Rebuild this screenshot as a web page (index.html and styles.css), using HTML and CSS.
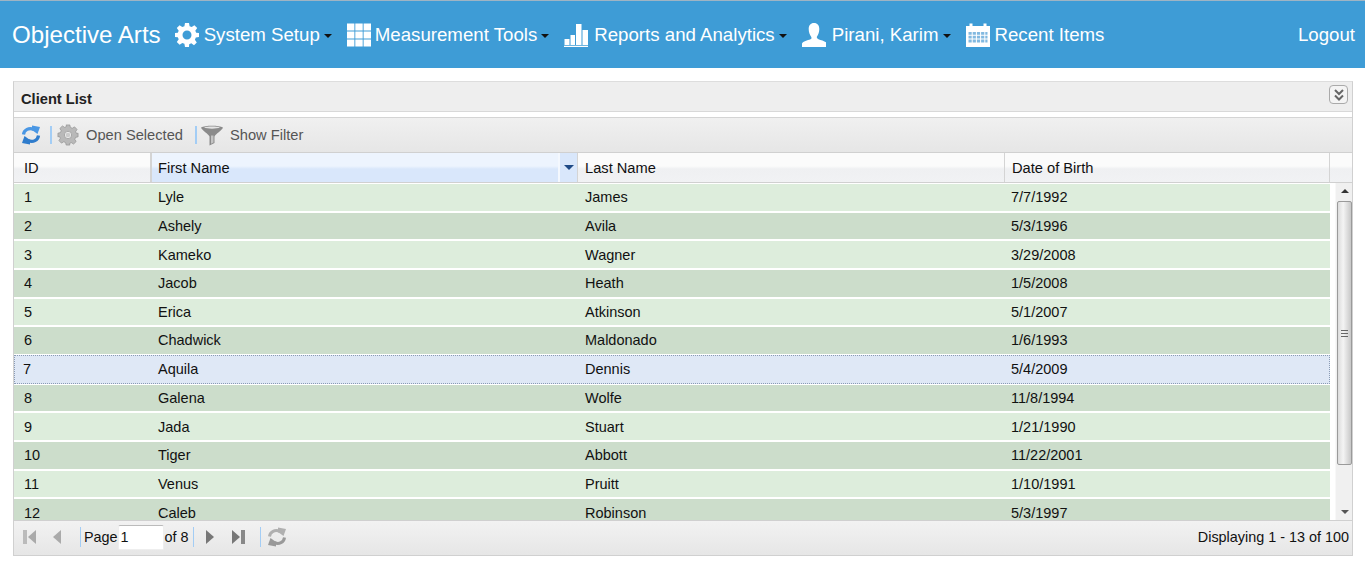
FILE: index.html
```html
<!DOCTYPE html>
<html lang="en">
<head>
    <meta charset="UTF-8">
    <title>Client List</title>
    <link rel="stylesheet" href="styles.css">
</head>
<body>
    <nav class="navbar">
        <a class="brand">Objective Arts</a>
        <a class="nav-item">
            <svg class="nav-icon" viewBox="0 0 24 24"><path fill="#fff" fill-rule="evenodd" d="M10 0h4l.6 3.2 2.100.9L19.400 2.200l2.800 2.800-1.900 2.700.9 2.100 2.800.2v4l-3.200.6-.9 2.100 1.900 2.700-2.800 2.800-2.700-1.900-2.100.9L14 24h-4l-.6-3.200-2.100-.9-2.700 1.900-2.800-2.800 1.900-2.700-.9-2.100L0 14v-4l2.800-.2.9-2.100L1.800 5l2.800-2.800 2.700 1.900 2.100-.9zM12 7.500a4.500 4.500 0 1 0 0 9 4.500 4.500 0 0 0 0-9z"/></svg>
            System Setup<span class="caret"></span>
        </a>
        <a class="nav-item tight">
            <svg class="nav-icon" viewBox="0 0 24 24"><path fill="#fff" d="M0 .5h7.400v7H0zM8.300.5h7.400v7H8.300zM16.600.5H24v7h-7.400zM0 8.500h7.400v7H0zM8.300 8.500h7.400v7H8.300zM16.600 8.500H24v7h-7.400zM0 16.500h7.400v7H0zM8.300 16.500h7.400v7H8.300zM16.600 16.500H24v7h-7.400z"/></svg>
            Measurement Tools<span class="caret"></span>
        </a>
        <a class="nav-item reports">
            <svg class="nav-icon" viewBox="0 0 24 24"><path fill="#fff" d="M0 24v-1.200h24V24zM.5 22v-6h5v6zM6.500 22V12H11v10zM12 22V1h5.500v21zM18.500 22V7H24v15z"/></svg>
            Reports and Analytics<span class="caret"></span>
        </a>
        <a class="nav-item person">
            <svg class="nav-icon" viewBox="0 0 24 24"><path fill="#fff" d="M12 0c3.500 0 5.300 2.500 5.300 6 0 3-1 5.500-2.300 7.500-.5 1 0 2 1.500 2.700 3 1.200 7.500 2 8.500 4.300V24H0v-3.500c1-2.300 5.500-3.100 8.500-4.300C10 15.500 9.500 14.500 9 13.500 7.700 11.500 6.700 9 6.700 6c0-3.500 1.800-6 5.300-6z"/></svg>
            Pirani, Karim<span class="caret"></span>
        </a>
        <a class="nav-item">
            <svg class="nav-icon" viewBox="0 0 24 24"><path fill="#fff" d="M0 3h3.500V.5h3V3h11V.5h3V3H24v21H0z"/><path fill="#82b9e0" d="M2.500 9h3.200v2.800H2.500zM6.700 9h3.200v2.800H6.700zM10.900 9h3.200v2.800h-3.200zM15.100 9h3.200v2.800h-3.200zM19.300 9h2.200v2.800h-2.200zM2.500 12.800h3.200v2.800H2.500zM6.700 12.800h3.200v2.800H6.700zM10.900 12.800h3.200v2.800h-3.200zM15.100 12.800h3.200v2.800h-3.200zM19.300 12.800h2.200v2.800h-2.200zM2.500 16.600h3.200v2.800H2.500zM6.700 16.600h3.200v2.800H6.700zM10.900 16.600h3.200v2.800h-3.200zM15.100 16.600h3.200v2.800h-3.200zM19.300 16.600h2.200v2.800h-2.200z"/></svg>
            Recent Items
        </a>
        <a class="logout">Logout</a>
    </nav>

    <section class="panel">
        <header class="panel-title">
            <span>Client List</span>
            <span class="collapse-btn">
                <svg viewBox="0 0 12 12" width="12" height="12"><path fill="none" stroke="#666" stroke-width="2" d="M2 1l4 4 4-4M2 6.500l4 4 4-4"/></svg>
            </span>
        </header>

        <div class="toolbar">
            <svg class="tool-icon" viewBox="0 0 20 20"><path fill="none" stroke="#4a97e4" stroke-width="3.200" d="M2.500 9.500C3 5 8 2 13 4.600"/><path fill="#4a97e4" d="M11 .5l8 1.500-2.500 7-5.500-4z"/><path fill="none" stroke="#2f7ccc" stroke-width="3.200" d="M17.500 10.500C17 15 12 18 7 15.400"/><path fill="#2f7ccc" d="M9 19.500L1 18l2.500-7 5.500 4z"/></svg>
            <span class="sep tool-sep"></span>
            <svg class="tool-icon gear" viewBox="0 0 24 24"><path fill="#b9b9b9" fill-rule="evenodd" stroke="#8f8f8f" stroke-width=".7" d="M10 1h4l.6 2.700 2.100.9 2.400-1.500 2.800 2.800-1.500 2.400.9 2.100L23 10v4l-2.700.6-.9 2.100 1.500 2.400-2.800 2.800-2.400-1.500-2.100.9L14 23h-4l-.6-2.700-2.100-.9-2.400 1.500-2.800-2.800 1.500-2.400-.9-2.100L1 14v-4l2.700-.6.9-2.100-1.500-2.400 2.800-2.800 2.400 1.500 2.100-.9zM12 8a4 4 0 1 0 0 8 4 4 0 0 0 0-8z"/><circle cx="12" cy="12" r="2.500" fill="#ccc"/></svg>
            <span class="tool-label">Open Selected</span>
            <span class="sep tool-sep after-label"></span>
            <svg class="tool-icon funnel" viewBox="0 0 22 22"><path fill="#8b8b8b" d="M0 3.500C4 1 18 1 22 3.500 21 6.500 14.500 10 13.500 12.500V19l-5 2.500v-9C7.500 10 1 6.500 0 3.500z"/><path fill="#e4e4e4" d="M3 3.500c3.500-1.200 12.500-1.200 16 0-3.500 1.500-12.500 1.500-16 0z"/><path fill="#c4c4c4" d="M10 11.500h2.500v7l-2.500 1.200z"/></svg>
            <span class="tool-label">Show Filter</span>
        </div>

        <div class="grid-head">
            <div class="col col-id">ID</div>
            <div class="col col-first sorted">First Name<span class="sort-btn"><span class="sort-arrow"></span></span></div>
            <div class="col col-last">Last Name</div>
            <div class="col col-dob">Date of Birth</div>
            <div class="col col-rest"></div>
        </div>

        <div class="grid-body">
            <div class="rows">
                <div class="row"><div class="col-id">1</div><div class="col-first">Lyle</div><div class="col-last">James</div><div class="col-dob">7/7/1992</div></div>
                <div class="row alt"><div class="col-id">2</div><div class="col-first">Ashely</div><div class="col-last">Avila</div><div class="col-dob">5/3/1996</div></div>
                <div class="row"><div class="col-id">3</div><div class="col-first">Kameko</div><div class="col-last">Wagner</div><div class="col-dob">3/29/2008</div></div>
                <div class="row alt"><div class="col-id">4</div><div class="col-first">Jacob</div><div class="col-last">Heath</div><div class="col-dob">1/5/2008</div></div>
                <div class="row"><div class="col-id">5</div><div class="col-first">Erica</div><div class="col-last">Atkinson</div><div class="col-dob">5/1/2007</div></div>
                <div class="row alt"><div class="col-id">6</div><div class="col-first">Chadwick</div><div class="col-last">Maldonado</div><div class="col-dob">1/6/1993</div></div>
                <div class="row selected"><div class="col-id">7</div><div class="col-first">Aquila</div><div class="col-last">Dennis</div><div class="col-dob">5/4/2009</div></div>
                <div class="row alt"><div class="col-id">8</div><div class="col-first">Galena</div><div class="col-last">Wolfe</div><div class="col-dob">11/8/1994</div></div>
                <div class="row"><div class="col-id">9</div><div class="col-first">Jada</div><div class="col-last">Stuart</div><div class="col-dob">1/21/1990</div></div>
                <div class="row alt"><div class="col-id">10</div><div class="col-first">Tiger</div><div class="col-last">Abbott</div><div class="col-dob">11/22/2001</div></div>
                <div class="row"><div class="col-id">11</div><div class="col-first">Venus</div><div class="col-last">Pruitt</div><div class="col-dob">1/10/1991</div></div>
                <div class="row alt"><div class="col-id">12</div><div class="col-first">Caleb</div><div class="col-last">Robinson</div><div class="col-dob">5/3/1997</div></div>
            </div>
            <div class="scrollbar">
                <span class="scroll-up"></span>
                <div class="scroll-thumb"><span class="grip"></span></div>
                <span class="scroll-down"></span>
            </div>
        </div>

        <footer class="pager">
            <svg class="page-icon" viewBox="0 0 16 16"><path fill="#bbb" d="M1 1h4v14H1z"/><path fill="#aaa" d="M14 1v14L6 8z"/></svg>
            <svg class="page-icon spaced" viewBox="0 0 16 16"><path fill="#aaa" d="M11 1v14L3 8z"/></svg>
            <span class="sep pager-sep wide-left"></span>
            <span>Page</span>
            <input class="page-input" value="1">
            <span>of 8</span>
            <span class="sep pager-sep"></span>
            <svg class="page-icon next" viewBox="0 0 16 16"><path fill="#777" d="M4 1v14l8-7z"/></svg>
            <svg class="page-icon spaced" viewBox="0 0 16 16"><path fill="#777" d="M2 1v14l8-7z"/><path fill="#888" d="M11 1h4v14h-4z"/></svg>
            <span class="sep pager-sep wide-left"></span>
            <svg class="tool-icon refresh" viewBox="0 0 20 20"><path fill="none" stroke="#b0b0b0" stroke-width="3" d="M2.500 9.500C3 5 8 2 13 4.600"/><path fill="#b0b0b0" d="M11 .5l8 1.500-2.500 7-5.500-4z"/><path fill="none" stroke="#999" stroke-width="3" d="M17.500 10.500C17 15 12 18 7 15.400"/><path fill="#999" d="M9 19.500L1 18l2.500-7 5.500 4z"/></svg>
            <span class="display-info">Displaying 1 - 13 of 100</span>
        </footer>
    </section>
</body>
</html>
```

FILE: styles.css
```css
* {
    box-sizing: border-box;
}
body {
    margin: 0;
    height: 576px;
    overflow: hidden;
    background: #fff;
    font-family: "Liberation Sans", Arial, sans-serif;
    font-size: 14.67px;
    color: #111;
}

/* top nav */
.navbar {
    display: flex;
    align-items: center;
    height: 68px;
    padding: 0 10px 0 12px;
    background: #3e9cd6;
    border-top: 1px solid #9fb4c4;
    color: #fff;
}
.brand {
    font-size: 24.1px;
    margin-right: 14px;
}
.nav-item {
    display: flex;
    align-items: center;
    font-size: 18.67px;
    margin-right: 15px;
}
.nav-icon {
    width: 24px;
    height: 24px;
    margin-right: 5px;
}
.tight .nav-icon {
    margin-right: 4px;
}
.reports .nav-icon,
.person .nav-icon {
    margin-right: 6px;
}
.caret {
    width: 0;
    height: 0;
    margin-left: 4px;
    margin-top: 2px;
    border-left: 4px solid transparent;
    border-right: 4px solid transparent;
    border-top: 4px solid #111;
}
.logout {
    margin-left: auto;
    font-size: 18.67px;
}

/* panel */
.panel {
    margin: 13px 12px 0 13px;
    width: 1340px;
    height: 475px;
    display: flex;
    flex-direction: column;
    border: 1px solid #d0d0d0;
    border-top-color: #ddd;
}
.panel-title {
    display: flex;
    justify-content: space-between;
    align-items: center;
    height: 30px;
    padding: 4px 4px 0 7px;
    background: #eee;
    border-bottom: 1px solid #d8d8d8;
    font-weight: bold;
    color: #222;
}
.collapse-btn {
    display: flex;
    align-items: center;
    justify-content: center;
    width: 19px;
    height: 19px;
    margin-top: -8px;
    border: 1px solid #aaa;
    border-radius: 4px;
    background: #f4f4f4;
}
.toolbar {
    display: flex;
    align-items: center;
    height: 36px;
    margin-top: 5px;
    padding: 0 7px;
    background: linear-gradient(#f0f0f0, #e6e6e6);
    border-top: 1px solid #d4d4d4;
    border-bottom: 1px solid #d0d0d0;
    color: #555;
}
.tool-icon {
    width: 20px;
    height: 20px;
}
.gear,
.funnel {
    width: 22px;
    height: 22px;
}
.tool-label {
    margin-left: 7px;
}
.sep {
    width: 1px;
    height: 18px;
    background: #a3cdf5;
}
.tool-sep {
    width: 2px;
    margin: 0 5px 0 9px;
}
.tool-sep.after-label {
    margin: 0 4px 0 12px;
}

/* grid */
.grid-head {
    display: flex;
    height: 30px;
    border-bottom: 1px solid #d0d0d0;
    background: linear-gradient(#fbfbfb 45%, #eff0f2 55%, #f1f2f4);
}
.col {
    display: flex;
    align-items: center;
    border-right: 1px solid #d4d4d4;
}
.col-id {
    width: 138px;
    padding-left: 10px;
    flex: none;
}
.col-first {
    width: 426px;
    padding-left: 6px;
    flex: none;
}
.col-last {
    width: 427px;
    padding-left: 7px;
    flex: none;
}
.col-dob {
    width: 325px;
    padding-left: 6px;
    flex: none;
}
.col-rest {
    flex: 1;
    border-right: none;
}
.grid-head .col-dob {
    padding-left: 7px;
}
.grid-head .col-id {
    border-right: 2px solid #d4d4d4;
}
.sorted {
    position: relative;
    background: linear-gradient(#edf4fe 45%, #d9e7fb 55%, #d9e7fb);
}
.sort-btn {
    position: absolute;
    top: 0;
    right: 0;
    bottom: 0;
    width: 19px;
    display: flex;
    align-items: center;
    justify-content: center;
    background: #d9e7fb;
    border-left: 2px solid #f4f8fe;
}
.sort-arrow {
    width: 0;
    height: 0;
    border-left: 5px solid transparent;
    border-right: 5px solid transparent;
    border-top: 5px solid #1f4a86;
}
.grid-body {
    flex: 1;
    display: flex;
    min-height: 0;
    overflow: hidden;
    font-size: 14.5px;
}
.rows {
    width: 1316px;
    padding-top: 1px;
    overflow: hidden;
}
.row {
    display: flex;
    align-items: center;
    height: 28.64px;
    background: #ddeddc;
    border-bottom: 2px solid #fff;
}
.row.alt {
    background: #ccddcb;
}
.row.selected {
    height: 29px;
    margin: -1px 0 1px;
    padding-bottom: 1px;
    background: #dfe8f6;
    border: 1px dotted #8a9bb5;
}
.row.selected .col-id {
    width: 137px;
    padding-left: 8px;
}
.scrollbar {
    position: relative;
    flex: 1;
    margin-left: 5px;
    background: #f0f0f0;
    border-left: 1px solid #f8f8f8;
}
.scroll-up,
.scroll-down {
    position: absolute;
    left: 5px;
    width: 0;
    height: 0;
    border-left: 4px solid transparent;
    border-right: 4px solid transparent;
}
.scroll-up {
    top: 6px;
    border-bottom: 4px solid #333;
}
.scroll-down {
    bottom: 6px;
    border-top: 4px solid #555;
}
.scroll-thumb {
    position: absolute;
    top: 18px;
    left: 1px;
    width: 15px;
    height: 264px;
    display: flex;
    align-items: center;
    justify-content: center;
    background: linear-gradient(90deg, #dcdcdc, #f4f4f4 40%, #c8c8c8);
    border: 1px solid #9a9a9a;
    border-radius: 2px;
}
.grip {
    width: 7px;
    height: 7px;
    background: repeating-linear-gradient(#666 0 1px, transparent 1px 3px);
}

/* pager */
.pager {
    display: flex;
    align-items: center;
    height: 35px;
    padding: 0 3px 2px 8px;
    background: linear-gradient(#f2f2f2, #e6e6e6);
    border-top: 1px solid #d0d0d0;
    font-size: 14.4px;
}
.page-icon {
    width: 16px;
    height: 16px;
}
.page-icon.spaced {
    margin-left: 12px;
    margin-right: 4px;
}
.page-icon.next {
    margin-left: 5px;
}
.pager-sep {
    height: 20px;
    margin: 0 3px 0 4px;
}
.pager-sep.wide-left {
    margin-left: 10px;
}
.page-input {
    width: 46px;
    height: 25px;
    margin: 0 1px 0 0;
    padding: 0 0 0 2px;
    border: 1px solid #eee;
    border-top-color: #bbb;
    border-radius: 2px;
    font: 14.4px "Liberation Sans", Arial, sans-serif;
    color: #111;
    background: #fff;
}
.refresh {
    margin-left: 3px;
}
.display-info {
    margin-left: auto;
}
```
